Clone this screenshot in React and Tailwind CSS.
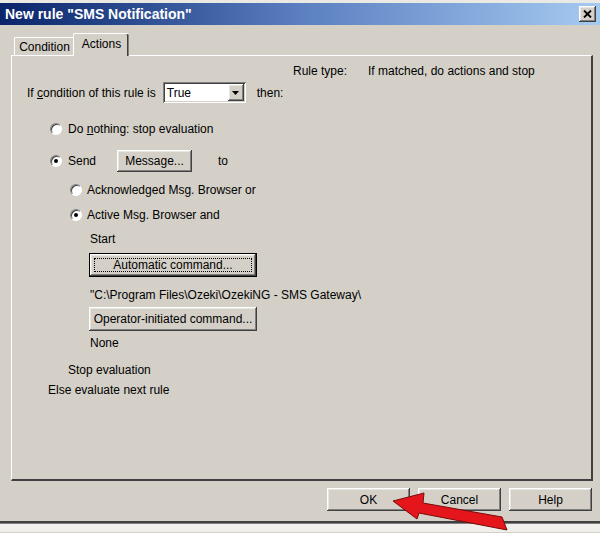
import React from "react";

const raised =
  "shadow-[inset_-1px_-1px_#404040,inset_1px_1px_#ffffff,inset_-2px_-2px_#808080,inset_2px_2px_#e8e6e0]";
const sunken =
  "shadow-[inset_1px_1px_#808080,inset_-1px_-1px_#ffffff,inset_2px_2px_#404040,inset_-2px_-2px_#d4d0c8]";

const Radio = ({ checked }) => (
  <span className="relative inline-block w-[12px] h-[12px] shrink-0 rounded-full bg-white border border-t-[#808080] border-l-[#808080] border-b-white border-r-white shadow-[inset_1px_1px_#404040]">
    {checked && (
      <span className="absolute left-[3px] top-[3px] w-[4px] h-[4px] rounded-full bg-black" />
    )}
  </span>
);

const Button = ({ children, className = "", isDefault = false }) => (
  <div
    className={`flex items-center justify-center bg-[#d4d0c8] ${
      isDefault ? "border border-black" : ""
    } ${className}`}
  >
    <div className={`w-full h-full flex items-center justify-center ${raised}`}>
      {isDefault ? (
        <div className="flex items-center justify-center w-[calc(100%-8px)] h-[calc(100%-8px)] border border-dotted border-black">
          {children}
        </div>
      ) : (
        children
      )}
    </div>
  </div>
);

const App = () => {
  return (
    <div className="relative w-[600px] h-[533px] overflow-hidden bg-[#d4d0c8] text-[12px] leading-[16px] text-black font-['Liberation_Sans',Arial,sans-serif]">
      <div className="h-[3px] bg-[#ebe9e3]" />

      {/* title bar */}
      <div className="h-[22px] flex items-center justify-between pl-[5px] pr-[4px] bg-gradient-to-r from-[#0a246a] via-[#5b7fc0] to-[#a6caf0]">
        <span className="text-white font-bold text-[14px]">
          New rule "SMS Notification"
        </span>
        <div className={`w-[17px] h-[16px] bg-[#d4d0c8] flex items-center justify-center ${raised}`}>
          <svg width="9" height="8" viewBox="0 0 9 8">
            <path d="M1 0.5 L8 7.5 M8 0.5 L1 7.5" stroke="#000" strokeWidth="1.8" />
          </svg>
        </div>
      </div>

      {/* tabs */}
      <div className="flex items-end ml-[14px] mt-[8px] h-[23px] relative z-10">
        <div className="h-[19px] w-[60px] flex items-center justify-center border-t border-l border-white rounded-tl-[2px] shadow-[inset_-1px_0_#808080]">
          Condition
        </div>
        <div className="h-[23px] w-[56px] -ml-[1px] flex items-center justify-center bg-[#d4d0c8] border-t border-l border-white rounded-t-[2px] shadow-[inset_-1px_0_#808080,inset_-2px_0_#404040] pb-[2px]">
          Actions
        </div>
      </div>

      {/* tab panel */}
      <div className="ml-[11px] w-[582px] h-[426px] -mt-[1px] border-t border-l border-white border-r-2 border-r-[#404040] border-b-2 border-b-[#404040] flex flex-col">
        <div className="flex mt-[7px] ml-[281px] h-[16px]">
          <span className="w-[75px]">Rule type:</span>
          <span>If matched, do actions and stop</span>
        </div>

        <div className="flex items-center mt-[3px] ml-[15px] h-[21px]">
          <span>
            If <u>c</u>ondition of this rule is
          </span>
          <div className={`ml-[7px] w-[83px] h-[21px] bg-white flex items-center pl-[4px] pr-[2px] ${sunken}`}>
            <span className="flex-1">True</span>
            <div className={`w-[16px] h-[17px] bg-[#d4d0c8] flex items-center justify-center ${raised}`}>
              <svg width="7" height="4" viewBox="0 0 7 4">
                <path d="M0 0 H7 L3.5 4 Z" fill="#000" />
              </svg>
            </div>
          </div>
          <span className="ml-[11px]">then:</span>
        </div>

        <div className="flex items-center gap-[6px] mt-[18px] ml-[38px] h-[16px]">
          <Radio />
          <span>
            Do <u>n</u>othing: stop evaluation
          </span>
        </div>

        <div className="flex items-center mt-[13px] ml-[38px] h-[22px]">
          <Radio checked />
          <span className="ml-[6px]">Send</span>
          <Button className="ml-[21px] w-[75px] h-[22px]">Message...</Button>
          <span className="ml-[26px]">to</span>
        </div>

        <div className="flex items-center gap-[5px] mt-[10px] ml-[58px] h-[16px]">
          <Radio />
          <span>Acknowledged Msg. Browser or</span>
        </div>

        <div className="flex items-center gap-[5px] mt-[9px] ml-[58px] h-[16px]">
          <Radio checked />
          <span>Active Msg. Browser and</span>
        </div>

        <div className="mt-[8px] ml-[78px] h-[16px]">Start</div>

        <Button isDefault className="mt-[6px] ml-[77px] w-[168px] h-[24px]">
          Automatic command...
        </Button>

        <div className="mt-[10px] ml-[78px] h-[16px] whitespace-nowrap">
          "C:\Program Files\Ozeki\OzekiNG - SMS Gateway\
        </div>

        <Button className="mt-[4px] ml-[77px] w-[168px] h-[24px]">
          Operator-initiated command...
        </Button>

        <div className="mt-[4px] ml-[78px] h-[16px]">None</div>

        <div className="mt-[11px] ml-[56px] h-[16px]">Stop evaluation</div>

        <div className="mt-[4px] ml-[36px] h-[16px]">Else evaluate next rule</div>
      </div>

      {/* dialog buttons */}
      <div className="flex justify-end gap-[8px] mt-[7px] pr-[8px]">
        <Button className="w-[83px] h-[23px]">OK</Button>
        <Button className="w-[83px] h-[23px]">Cancel</Button>
        <Button className="w-[83px] h-[23px]">Help</Button>
      </div>

      <div className="mt-[10px] h-[2px] bg-[#404040]" />
      <div className="h-[1px] bg-[#808080]" />
      <div className="h-[8px] bg-[#f0efeb]" />

      {/* red arrow annotation */}
      <svg
        className="absolute left-0 top-0 pointer-events-none"
        width="600"
        height="533"
        viewBox="0 0 600 533"
      >
        <polygon
          points="393,501 424,493 423,503 502,517 507,530 419,513 417,519"
          fill="#e4161b"
          stroke="#7a0a0a"
          strokeWidth="1"
          strokeLinejoin="round"
        />
      </svg>
    </div>
  );
};

export default App;
